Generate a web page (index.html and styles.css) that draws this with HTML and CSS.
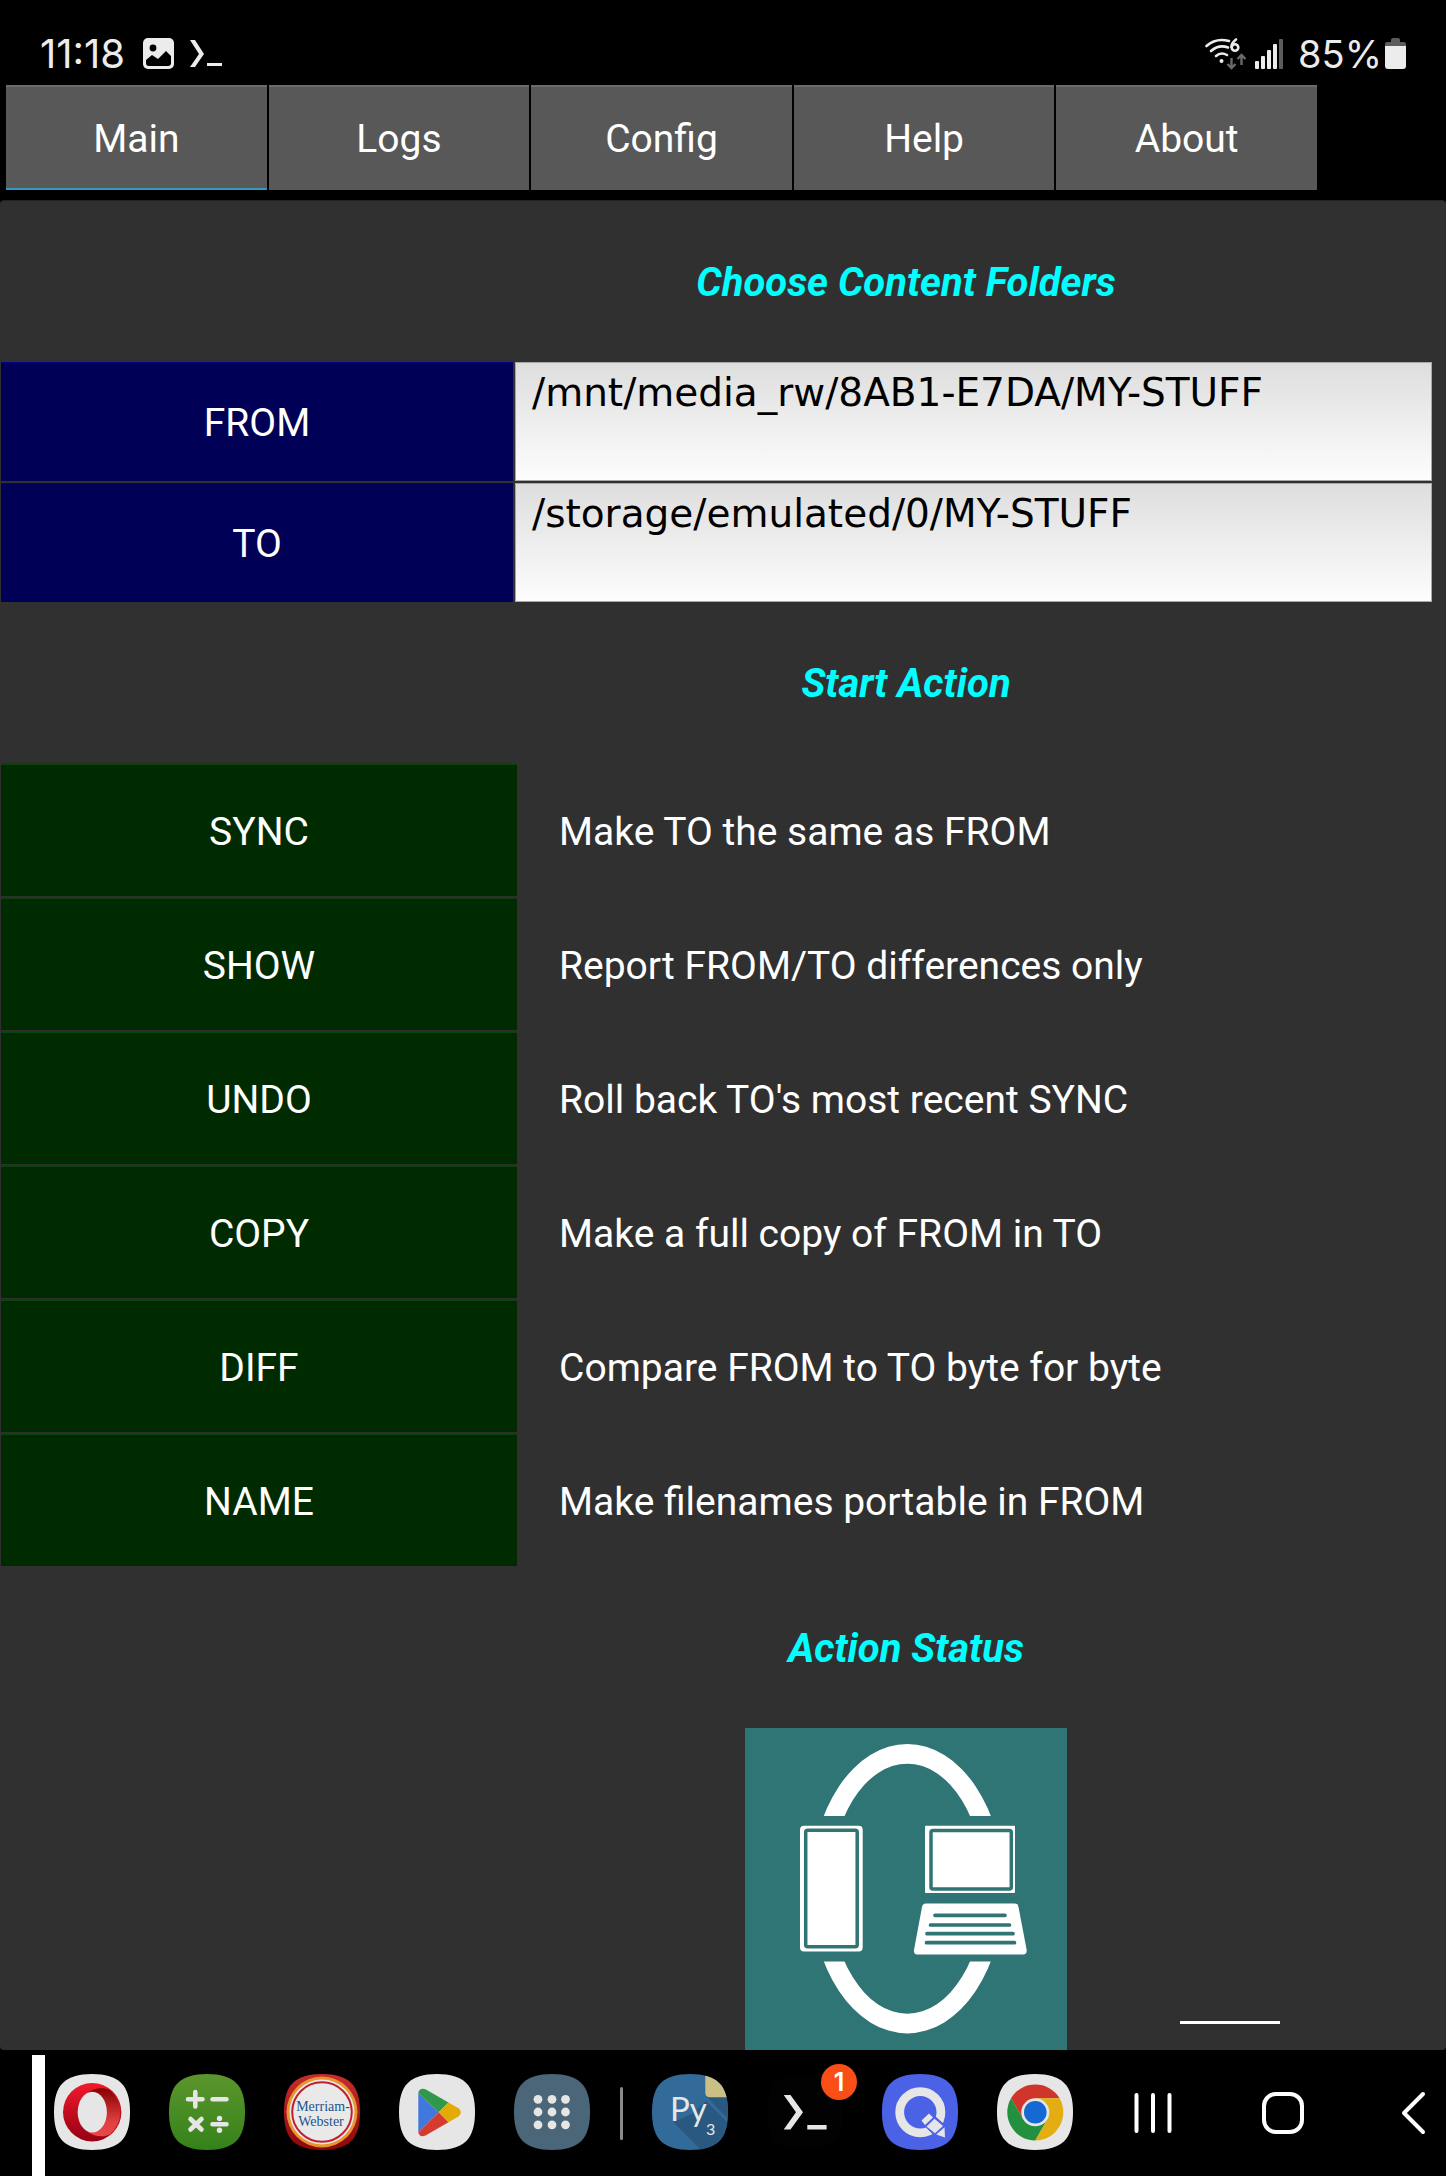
FILE: index.html
```html
<!DOCTYPE html>
<html lang="en">
<head>
    <meta charset="UTF-8">
    <meta name="viewport" content="width=device-width, initial-scale=1.0">
    <title>Content Sync</title>
    <link rel="stylesheet" href="styles.css">
</head>
<body>
    <header class="status-bar">
        <span class="clock">11:18</span>
        <svg class="notif-image" width="32" height="32" viewBox="0 0 32 32">
            <rect x="0" y="0" width="31" height="31" rx="5" fill="#ececec"/>
            <circle cx="10" cy="10" r="3.4" fill="#000"/>
            <path d="M3 22 L9 17 L15 21 L23 13 L28 18 V25 Q28 28 25 28 H6 Q3 28 3 25Z" fill="#000"/>
        </svg>
        <svg class="notif-term" width="34" height="28" viewBox="0 0 34 28">
            <path d="M0 0 H5 L14 14 L5 27 H0 L9 14Z M17 23 H32 V26 H17Z" fill="#ececec"/>
        </svg>
        <span class="spacer"></span>
        <svg class="wifi" width="42" height="32" viewBox="0 0 42 32">
            <g fill="none" stroke="#ececec" stroke-width="2.6" stroke-linecap="round">
                <path d="M1.5 8 Q11 -0.5 24 3"/>
                <path d="M6 13 Q14 6 23 9.5"/>
                <path d="M11 18 Q16 13.5 22 17"/>
                <path d="M31 1.500 Q26.500 5 26.500 9"/>
                <circle cx="30" cy="9.500" r="3.300"/>
            </g>
            <circle cx="16.500" cy="23" r="2" fill="#ececec"/>
            <path d="M26.500 20 V29 M22.500 26 L26.500 30 L30.500 26 M36.500 27 V18 M32.500 21 L36.500 17 L40.500 21" fill="none" stroke="#6a6a6a" stroke-width="2.400"/>
        </svg>
        <svg class="signal" width="29" height="30" viewBox="0 0 29 30">
            <g fill="#ececec">
                <rect x="0" y="22" width="4" height="8" rx="1"/>
                <rect x="6" y="17" width="4" height="13" rx="1"/>
                <rect x="12" y="11" width="4" height="19" rx="1"/>
                <rect x="18" y="5" width="4" height="25" rx="1"/>
            </g>
            <rect x="24" y="0" width="4" height="30" rx="1" fill="#5c5c5c"/>
        </svg>
        <span class="battery-text">85%</span>
        <svg class="battery" width="21" height="31" viewBox="0 0 21 31">
            <path d="M0 9 V6 Q0 4 2 4 H6 V2 Q6 0 8 0 H13 Q15 0 15 2 V4 H19 Q21 4 21 6 V9Z" fill="#5c5c5c"/>
            <path d="M0 8 H21 V28 Q21 31 18 31 H3 Q0 31 0 28Z" fill="#ececec"/>
        </svg>
    </header>

    <nav class="tabs">
        <button class="tab active">Main</button>
        <button class="tab">Logs</button>
        <button class="tab">Config</button>
        <button class="tab">Help</button>
        <button class="tab">About</button>
    </nav>

    <main class="panel">
        <h2 class="section-title">Choose Content Folders</h2>
        <div class="folders">
            <button class="folder-btn" id="fromBtn">FROM</button>
            <textarea class="folder-path" aria-labelledby="fromBtn" spellcheck="false">/mnt/media_rw/8AB1-E7DA/MY-STUFF</textarea>
            <button class="folder-btn" id="toBtn">TO</button>
            <textarea class="folder-path" aria-labelledby="toBtn" spellcheck="false">/storage/emulated/0/MY-STUFF</textarea>
        </div>

        <h2 class="section-title">Start Action</h2>
        <div class="actions">
            <button class="action-btn">SYNC</button>
            <span class="action-text">Make TO the same as FROM</span>
            <button class="action-btn">SHOW</button>
            <span class="action-text">Report FROM/TO differences only</span>
            <button class="action-btn">UNDO</button>
            <span class="action-text">Roll back TO's most recent SYNC</span>
            <button class="action-btn">COPY</button>
            <span class="action-text">Make a full copy of FROM in TO</span>
            <button class="action-btn">DIFF</button>
            <span class="action-text">Compare FROM to TO byte for byte</span>
            <button class="action-btn">NAME</button>
            <span class="action-text">Make filenames portable in FROM</span>
        </div>

        <h2 class="section-title">Action Status</h2>
        <div class="status">
            <svg class="logo" width="322" height="322" viewBox="0 0 322 322">
                <rect width="322" height="322" fill="#307575"/>
                <path fill="#fff" fill-rule="evenodd" d="M65.600 160.700 A96.700 144.700 0 0 1 259 160.700 A96.700 144.700 0 0 1 65.600 160.700Z M85.100 160.700 A77.200 125 0 0 0 239.500 160.700 A77.200 125 0 0 0 85.100 160.700Z"/>
                <rect x="50" y="88" width="230" height="145.500" fill="#307575"/>
                <!-- phone -->
                <rect x="55" y="97.700" width="62.700" height="125.700" rx="4" fill="#fff"/>
                <rect x="60.700" y="102.300" width="51.500" height="116.500" rx="2" fill="none" stroke="#307575" stroke-width="3.500"/>
                <!-- laptop -->
                <rect x="180" y="97.700" width="90" height="67.300" rx="1" fill="#fff"/>
                <rect x="186" y="102.500" width="80.300" height="58.500" rx="2" fill="none" stroke="#307575" stroke-width="3.500"/>
                <path d="M181 175.500 H270 Q273 175.500 273.500 179 L281.700 222 Q282 226.500 278 226.500 H172 Q168.500 226.500 169 222 L177 179 Q177.500 175.500 181 175.500Z" fill="#fff"/>
                <path d="M190 187.300 H260 M185.500 197 H264.500 M182 205.700 H268 M181.500 214.700 H269.500" stroke="#307575" stroke-width="3.700" stroke-linecap="round"/>
            </svg>
            <span class="cursor-line"></span>
        </div>
    </main>

    <footer class="taskbar">
        <span class="handle"></span>
        <button class="app" aria-label="Opera">
            <svg width="76" height="76" viewBox="0 0 76 76">
                <defs>
                    <linearGradient id="op1" x1="0" y1="0" x2="0" y2="1"><stop offset="0" stop-color="#f01a2c"/><stop offset="1" stop-color="#960013"/></linearGradient>
                    <linearGradient id="op2" x1="0" y1="0" x2="0" y2="1"><stop offset="0" stop-color="#850000"/><stop offset="0.700" stop-color="#e04040"/><stop offset="1" stop-color="#ea4848"/></linearGradient>
                </defs>
                <path d="M38 0 C65 0 76 11 76 38 S65 76 38 76 S0 65 0 38 S11 0 38 0Z" fill="#e6e6e6"/>
                <circle cx="38.200" cy="38.200" r="29.200" fill="url(#op1)"/>
                <path d="M34 18.500 C40 14 49 13 56 16 A29.200 29.200 0 0 1 56 60.400 C49 63.500 40 62.500 34 58Z" fill="url(#op2)"/>
                <ellipse cx="38.300" cy="38.200" rx="14.600" ry="20.400" fill="#e6e6e6"/>
            </svg>
        </button>
        <button class="app" aria-label="Calculator">
            <svg width="76" height="76" viewBox="0 0 76 76">
                <defs>
                    <linearGradient id="calc" x1="0" y1="0" x2="0" y2="1"><stop offset="0" stop-color="#5c952d"/><stop offset="1" stop-color="#35821a"/></linearGradient>
                </defs>
                <path d="M38 0 C65 0 76 11 76 38 S65 76 38 76 S0 65 0 38 S11 0 38 0Z" fill="url(#calc)"/>
                <path d="M19 25.300 H33.500 M26.300 18 V32.500 M43.500 25.300 H57.500 M21.500 45 L32.500 55.500 M32.500 45 L21.500 55.500 M43.500 50.300 H57.500" stroke="#e6e6e6" stroke-width="4.600" stroke-linecap="round"/>
                <circle cx="50.500" cy="44.500" r="2.700" fill="#e6e6e6"/>
                <circle cx="50.500" cy="56.300" r="2.700" fill="#e6e6e6"/>
            </svg>
        </button>
        <button class="app" aria-label="Merriam-Webster">
            <svg width="76" height="76" viewBox="0 0 76 76">
                <defs>
                    <linearGradient id="mw" x1="0" y1="0" x2="0" y2="1"><stop offset="0" stop-color="#c82d2f"/><stop offset="1" stop-color="#8c0808"/></linearGradient>
                </defs>
                <path d="M38 0 C65 0 76 11 76 38 S65 76 38 76 S0 65 0 38 S11 0 38 0Z" fill="url(#mw)"/>
                <circle cx="38" cy="38" r="35.500" fill="#e8952f"/>
                <circle cx="38" cy="38" r="32.500" fill="#e9e9e9"/>
                <circle cx="38" cy="38" r="29.800" fill="none" stroke="#c11f2b" stroke-width="2"/>
                <text class="mw-text" x="39" y="37" text-anchor="middle">Merriam-</text>
                <text class="mw-text" x="37" y="52" text-anchor="middle">Webster</text>
            </svg>
        </button>
        <button class="app" aria-label="Play Store">
            <svg width="76" height="76" viewBox="0 0 76 76">
                <path d="M38 0 C65 0 76 11 76 38 S65 76 38 76 S0 65 0 38 S11 0 38 0Z" fill="#e6e6e6"/>
                <path d="M19.300 19 L39.700 38.300 L19.300 58.500Z" fill="#4078e0"/>
                <path d="M19.300 19 Q20.500 13.500 26.500 15.200 L49.500 28.500 L39.700 38.300Z" fill="#30984a"/>
                <path d="M19.300 58.500 Q20.500 63.800 26.500 61.500 L49.500 48.300 L39.700 38.300Z" fill="#d53c30"/>
                <path d="M49.500 28.500 L59.500 34.300 Q64.500 38.300 59.500 42.500 L49.500 48.300 L39.700 38.300Z" fill="#e3ab06"/>
            </svg>
        </button>
        <button class="app" aria-label="All apps">
            <svg width="76" height="76" viewBox="0 0 76 76">
                <path d="M38 0 C65 0 76 11 76 38 S65 76 38 76 S0 65 0 38 S11 0 38 0Z" fill="#4a6678"/>
                <g fill="#e6e6e6">
                    <circle cx="24" cy="25.300" r="4.400"/><circle cx="38" cy="25.300" r="4.400"/><circle cx="51.500" cy="25.300" r="4.400"/>
                    <circle cx="24" cy="38" r="4.400"/><circle cx="38" cy="38" r="4.400"/><circle cx="51.500" cy="38" r="4.400"/>
                    <circle cx="24" cy="50.800" r="4.400"/><circle cx="38" cy="50.800" r="4.400"/><circle cx="51.500" cy="50.800" r="4.400"/>
                </g>
            </svg>
        </button>
        <span class="divider"></span>
        <button class="app" aria-label="Pydroid 3">
            <svg width="76" height="76" viewBox="0 0 76 76">
                <defs>
                    <clipPath id="sq"><path d="M38 0 C65 0 76 11 76 38 S65 76 38 76 S0 65 0 38 S11 0 38 0Z"/></clipPath>
                </defs>
                <g clip-path="url(#sq)">
                    <rect width="76" height="76" fill="#326a99"/>
                    <path d="M21 48 L49 76 H76 V49 L54 27 L40 40Z" fill="#295880"/>
                    <path d="M54 22 H76 V45Z" fill="#295880"/>
                    <path d="M53.300 0 H76 V23.300 H58 Q53.300 23.300 53.300 18.500Z" fill="#cbc084"/>
                </g>
                <text class="py-text" x="18" y="47">Py</text>
                <text class="py-sub" x="54" y="61">3</text>
            </svg>
        </button>
        <button class="app" aria-label="Terminal">
            <svg width="76" height="76" viewBox="0 0 76 76">
                <path d="M38 0 C65 0 76 11 76 38 S65 76 38 76 S0 65 0 38 S11 0 38 0Z" fill="#020202"/>
                <path d="M16.700 21 H23.500 L36 38.300 L23.500 55.500 H16.700 L29 38.300Z M40.300 51 H59.600 V55.500 H40.300Z" fill="#e6e6e6"/>
            </svg>
            <span class="badge">1</span>
        </button>
        <button class="app" aria-label="Quick editor">
            <svg width="76" height="76" viewBox="0 0 76 76">
                <path d="M38 0 C65 0 76 11 76 38 S65 76 38 76 S0 65 0 38 S11 0 38 0Z" fill="#4c62e6"/>
                <circle cx="38.300" cy="38.300" r="20.600" fill="none" stroke="#e6e6e6" stroke-width="8.800"/>
                <path d="M39.500 47 L47.500 39 L62.500 52.500 L63 63.500 L53.500 61Z" fill="#4c62e6" stroke="#4c62e6" stroke-width="3"/>
                <path d="M39.500 46.500 L47 39.500 L51 43.500 L43 51Z M44.500 52.500 L52.500 44.800 L61 52 L53 59.300Z M54.200 60.600 L62.500 53.200 L63 63.500Z" fill="#e6e6e6"/>
            </svg>
        </button>
        <button class="app" aria-label="Chrome">
            <svg width="76" height="76" viewBox="0 0 76 76">
                <path d="M38 0 C65 0 76 11 76 38 S65 76 38 76 S0 65 0 38 S11 0 38 0Z" fill="#e6e6e6"/>
                <path d="M38.300 38.300 L26.200 45.300 L14 24.300 A28.200 28.200 0 0 1 62.600 24.300 H38.300Z" fill="#d0352b"/>
                <path d="M38.300 38.300 L50.400 45.300 L38.300 66.500 A28.200 28.200 0 0 1 14 24.300 L26.200 45.300Z" fill="#23903f"/>
                <path d="M38.300 38.300 V24.300 H62.600 A28.200 28.200 0 0 1 38.300 66.500 L50.400 45.300Z" fill="#e4ae12"/>
                <circle cx="38.300" cy="38.300" r="14" fill="#e6e6e6"/>
                <circle cx="38.300" cy="38.300" r="11.300" fill="#1668d3"/>
            </svg>
        </button>
        <div class="nav-keys">
            <button class="key" aria-label="Recents">
                <svg width="42" height="44" viewBox="0 0 42 44">
                    <path d="M4.500 4 V40 M21 4 V40 M37.500 4 V40" stroke="#fff" stroke-width="4" stroke-linecap="round"/>
                </svg>
            </button>
            <button class="key" aria-label="Home">
                <svg width="42" height="44" viewBox="0 0 42 44">
                    <rect x="2" y="3" width="38" height="38" rx="12" fill="none" stroke="#fff" stroke-width="4"/>
                </svg>
            </button>
            <button class="key" aria-label="Back">
                <svg width="42" height="44" viewBox="0 0 42 44">
                    <path d="M31 3 L12 22 L31 41" fill="none" stroke="#fff" stroke-width="4" stroke-linecap="round" stroke-linejoin="round"/>
                </svg>
            </button>
        </div>
    </footer>
</body>
</html>
```
FILE: styles.css
```css
* {
    box-sizing: border-box;
}
body {
    margin: 0;
    min-height: 100vh;
    display: flex;
    flex-direction: column;
    background-color: #000;
    color: #fff;
    font-family: Roboto, sans-serif;
    font-size: 39px;
    line-height: 48px;
}
button {
    font: inherit;
    color: inherit;
    border: none;
    padding: 0;
    margin: 0;
    background: none;
    cursor: pointer;
}
svg {
    display: block;
}

/* status bar */
.status-bar {
    display: flex;
    align-items: center;
    height: 85px;
    padding: 22px 40px 0 40px;
    font-family: Inter, sans-serif;
    font-size: 38px;
    color: #ececec;
}
.clock {
    font-size: 40px;
}
.notif-image {
    margin-left: 18px;
}
.notif-term {
    margin-left: 15px;
}
.spacer {
    flex: 1;
}
.signal {
    margin-left: 8px;
}
.battery-text {
    margin-left: 14px;
}
.battery {
    margin-left: 3px;
}

/* tabs */
.tabs {
    display: flex;
    gap: 2px;
    padding: 0 129px 10px 6px;
}
.tab {
    flex: 1;
    height: 105px;
    padding-top: 2px;
    background-color: #585858;
    border-top: 2px solid #6c6a6b;
    border-bottom: 2px solid #585858;
}
.tab.active {
    border-bottom-color: #3498c0;
}

/* main panel */
.panel {
    flex: 1;
    background-color: #303030;
    border-top: 1px solid #222;
    border-radius: 4px;
}
.section-title {
    margin: 0;
    padding: 58px 13px 55px 379px;
    font-size: 40px;
    line-height: 48px;
    font-weight: bold;
    font-style: italic;
    text-align: center;
    color: #00ffff;
}
.folders {
    display: grid;
    grid-template-columns: 512px 1fr;
    gap: 2px;
    padding: 0 14px 0 1px;
}
.folder-btn {
    padding-top: 2px;
    background-color: #000056;
    border-top: 1px solid #00008a;
}
.folder-path {
    display: block;
    width: 100%;
    height: 119px;
    margin: 0;
    padding: 6px 16px;
    border: 1px solid #a5aaa6;
    border-radius: 0;
    background: linear-gradient(#dedede, #fdfdfd);
    color: #000;
    font-family: "DejaVu Sans", sans-serif;
    font-size: 39px;
    line-height: 48px;
    resize: none;
    overflow: hidden;
}
.actions {
    display: grid;
    grid-template-columns: 516px 1fr;
    grid-auto-rows: 133px;
    gap: 1px 42px;
    padding: 0 0 1px 1px;
    align-items: center;
}
.action-btn {
    height: 100%;
    padding-top: 2px;
    background-color: #002a00;
    border-top: 2px solid #0c420c;
}
.action-text {
    padding-top: 4px;
}
.status {
    display: flex;
    align-items: flex-end;
    padding-left: 745px;
}
.cursor-line {
    width: 100px;
    height: 3px;
    margin: 0 0 26px 113px;
    background-color: #fff;
}

/* taskbar */
.taskbar {
    display: flex;
    align-items: center;
    height: 126px;
    padding: 0 12px 0 32px;
}
.handle {
    align-self: flex-end;
    width: 13px;
    height: 121px;
    margin-right: 9px;
    background-color: #fff;
}
.app {
    position: relative;
    margin-right: 39px;
    margin-bottom: 2px;
}
.divider {
    width: 3px;
    height: 53px;
    margin-left: -9px;
    margin-right: 29px;
    background-color: #8a8a8a;
    border-radius: 2px;
}
.badge {
    position: absolute;
    top: -10px;
    right: -14px;
    width: 36px;
    height: 36px;
    border-radius: 50%;
    background-color: #f94f16;
    font-family: Inter, sans-serif;
    font-size: 25px;
    font-weight: 600;
    line-height: 36px;
    text-align: center;
}
.mw-text {
    font-family: "Liberation Serif", serif;
    font-size: 14px;
    fill: #1b5490;
}
.py-text {
    font-family: Lato, sans-serif;
    font-size: 33px;
    fill: #e6e6e6;
}
.py-sub {
    font-family: Lato, sans-serif;
    font-size: 16px;
    fill: #e6e6e6;
}
.nav-keys {
    display: flex;
    gap: 88px;
    margin-left: auto;
}
```
